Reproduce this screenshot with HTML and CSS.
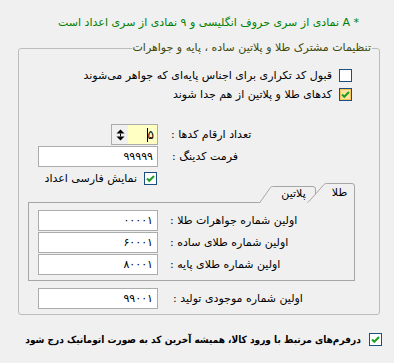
FILE: index.html
```html
<!DOCTYPE html>
<html lang="fa" dir="rtl">
<head>
    <meta charset="UTF-8">
    <title>تنظیمات کدینگ کالا</title>
    <link rel="stylesheet" href="styles.css">
</head>
<body>
    <!-- راهنمای بالا -->
    <div class="note">* A نمادی از سری حروف انگلیسی و ۹ نمادی از سری اعداد است</div>

    <div class="group">
        <div class="group-title">تنظیمات مشترک طلا و پلاتین ساده ، پایه و جواهرات</div>

        <div class="check-row">
            <span class="box">
                <svg width="13" height="13" viewBox="0 0 13 13"><rect x="0.5" y="0.5" width="12" height="12" fill="#fff" stroke="#1c4e7e"/></svg>
            </span>
            <span>قبول کد تکراری برای اجناس پایه‌ای که جواهر می‌شوند</span>
        </div>
        <div class="check-row">
            <span class="box">
                <svg width="13" height="13" viewBox="0 0 13 13"><rect x="0.5" y="0.5" width="12" height="12" fill="#fde49a" stroke="#1c4e7e"/><rect x="1.5" y="1.5" width="10" height="10" fill="none" stroke="#f6c45e"/><path d="M3 6.5 L5.3 8.8 L10 4" fill="none" stroke="#1f9e24" stroke-width="2"/></svg>
            </span>
            <span>کدهای طلا و پلاتین از هم جدا شوند</span>
        </div>

        <div class="fields">
            <div class="field-row">
                <div class="field-col">
                    <div class="spinner">
                        <span class="spin-btn">
                            <svg width="9" height="12" viewBox="0 0 9 12"><polygon points="0.5,4.5 4.5,0.5 8.5,4.5" fill="#000"/><rect x="4" y="4.5" width="1" height="3" fill="#000"/><polygon points="0.5,7.5 4.5,11.5 8.5,7.5" fill="#000"/></svg>
                        </span>
                        <span class="spin-value">۵<i class="caret"></i></span>
                    </div>
                </div>
                <span class="field-label">تعداد ارقام کدها :</span>
            </div>
            <div class="field-row gap-1">
                <input class="text-box" type="text" value="۹۹۹۹۹" readonly>
                <span class="field-label">فرمت کدینگ :</span>
            </div>
            <div class="field-row check-line">
                <div class="field-col">
                    <span class="check-label">نمایش فارسی اعداد</span>
                    <span class="box">
                        <svg width="13" height="13" viewBox="0 0 13 13"><rect x="0.5" y="0.5" width="12" height="12" fill="#fff" stroke="#1c4e7e"/><path d="M3 6.5 L5.3 8.8 L10 4" fill="none" stroke="#1f9e24" stroke-width="2"/></svg>
                    </span>
                </div>
            </div>
        </div>

        <!-- تب ها -->
        <div class="tab-strip">
            <div class="tab active">
                <svg class="tab-shape" width="48" height="20" viewBox="0 0 48 20"><path d="M0.5 20 L17 1.5 Q17.8 0.5 19.5 0.5 L45 0.5 Q47.5 0.5 47.5 3 L47.5 20 Z" fill="#f0f0f0" stroke="#a6a6a6"/><rect x="1" y="19" width="46" height="1" fill="#f0f0f0"/></svg>
                <span class="tab-text">طلا</span>
            </div>
            <div class="tab">
                <svg class="tab-shape" width="57" height="17" viewBox="0 0 57 17"><path d="M0.5 17 L11.5 1.5 Q12.2 0.5 13.5 0.5 L54 0.5 Q56.5 0.5 56.5 3 L56.5 17" fill="#f0f0f0" stroke="#a6a6a6"/></svg>
                <span class="tab-text">پلاتین</span>
            </div>
        </div>
        <div class="tab-panel">
            <div class="field-row">
                <input class="text-box" type="text" value="۰۰۰۰۱" readonly>
                <span class="field-label">اولین شماره جواهرات طلا :</span>
            </div>
            <div class="field-row gap-1">
                <input class="text-box" type="text" value="۶۰۰۰۱" readonly>
                <span class="field-label">اولین شماره طلای ساده :</span>
            </div>
            <div class="field-row gap-1">
                <input class="text-box" type="text" value="۸۰۰۰۱" readonly>
                <span class="field-label">اولین شماره طلای پایه :</span>
            </div>
        </div>

        <div class="fields last">
            <div class="field-row">
                <input class="text-box" type="text" value="۹۹۰۰۱" readonly>
                <span class="field-label wide">اولین شماره موجودی تولید :</span>
            </div>
        </div>
    </div>

    <div class="check-row bottom">
        <span class="box">
            <svg width="13" height="13" viewBox="0 0 13 13"><rect x="0.5" y="0.5" width="12" height="12" fill="#fff" stroke="#1c4e7e"/><path d="M3 6.5 L5.3 8.8 L10 4" fill="none" stroke="#1f9e24" stroke-width="2"/></svg>
        </span>
        <span class="bold-label">درفرم‌های مرتبط با ورود کالا، همیشه آخرین کد به صورت اتوماتیک درج شود</span>
    </div>
</body>
</html>
```

FILE: styles.css
```css
/* صفحه */
body {
    margin: 0;
    width: 394px;
    height: 363px;
    overflow: hidden;
    background: #f0f0f0;
    font-family: "DejaVu Sans", sans-serif;
    font-size: 11px;
    color: #000;
}

/* راهنما */
.note {
    color: #008000;
    padding: 15px 35px 0 0;
    height: 16px;
    line-height: 16px;
}

/* گروه تنظیمات */
.group {
    position: relative;
    box-sizing: border-box;
    width: 362px;
    height: 267px;
    margin: 17px 14px 0 0;
    padding: 17px 27px 0 0;
    border: 1px solid #bcbcbc;
    border-radius: 3px;
}

.group-title {
    position: absolute;
    top: -8px;
    right: 7px;
    padding: 0 1px;
    background: #f0f0f0;
    color: #3f4a0c;
    line-height: 14px;
}

/* چک باکس */
.check-row {
    display: flex;
    align-items: center;
    gap: 7px;
    height: 19px;
    white-space: nowrap;
}

.box {
    display: flex;
    flex: none;
    width: 13px;
    height: 13px;
}

.check-row.bottom {
    margin: 18px 12px 0 0;
    height: 13px;
    gap: 8px;
}

.bold-label {
    font-size: 10px;
    font-weight: bold;
    transform: scaleX(0.9);
    transform-origin: right center;
}

/* ردیف فیلدها */
.fields {
    direction: ltr;
    margin-top: 20px;
    margin-right: -27px;
    padding-left: 19px;
}

.fields.last {
    margin-top: 7px;
}

.field-row {
    display: flex;
    direction: ltr;
    height: 21px;
}

.field-row.check-line {
    height: 13px;
    margin-top: 5px;
}

.gap-1 {
    margin-top: 1px;
}

.field-col {
    display: flex;
    justify-content: flex-end;
    align-items: center;
    gap: 7px;
    width: 119px;
    flex: none;
    white-space: nowrap;
}

.check-label {
    direction: rtl;
    flex: none;
}

.field-label {
    direction: rtl;
    margin-left: 14px;
    line-height: 21px;
    white-space: nowrap;
}

.tab-panel .field-label {
    margin-left: 12px;
}

.field-label.wide {
    margin-left: 15px;
}

.text-box {
    box-sizing: border-box;
    width: 120px;
    height: 21px;
    margin: 0;
    padding: 0 4px 0 0;
    border: 1px solid #acacac;
    background: #fff;
    font-family: inherit;
    font-size: 11px;
    text-align: right;
    outline: none;
}

/* اسپینر */
.spinner {
    box-sizing: border-box;
    display: flex;
    width: 47px;
    height: 21px;
    margin-right: -1px;
    border: 1px solid #acacac;
    background: #ffffc4;
}

.spin-btn {
    display: flex;
    align-items: center;
    justify-content: center;
    width: 16px;
    background: #f0f0f0;
}

.spin-value {
    flex: 1;
    display: flex;
    align-items: center;
    justify-content: flex-end;
    padding-right: 3px;
    font-size: 12px;
}

.caret {
    order: -1;
    width: 1px;
    height: 14px;
    background: #000;
}

/* تب ها */
.tab-strip {
    display: flex;
    height: 19px;
    margin: -2px -3px 0 24px;
}

.tab {
    position: relative;
    display: flex;
    justify-content: center;
    box-sizing: border-box;
}

.tab-shape {
    position: absolute;
    top: 0;
    left: 0;
}

.tab-text {
    position: relative;
}

.tab.active {
    z-index: 2;
    width: 48px;
    height: 20px;
    padding-left: 17px;
    line-height: 20px;
}

.tab:not(.active) {
    z-index: 1;
    width: 57px;
    height: 16px;
    margin-top: 3px;
    margin-right: -9px;
    padding-left: 12px;
    line-height: 16px;
}

.tab-panel {
    box-sizing: border-box;
    width: 327px;
    height: 79px;
    margin-right: -3px;
    padding: 7px 0 0 9px;
    border: 1px solid #a6a6a6;
}
```
